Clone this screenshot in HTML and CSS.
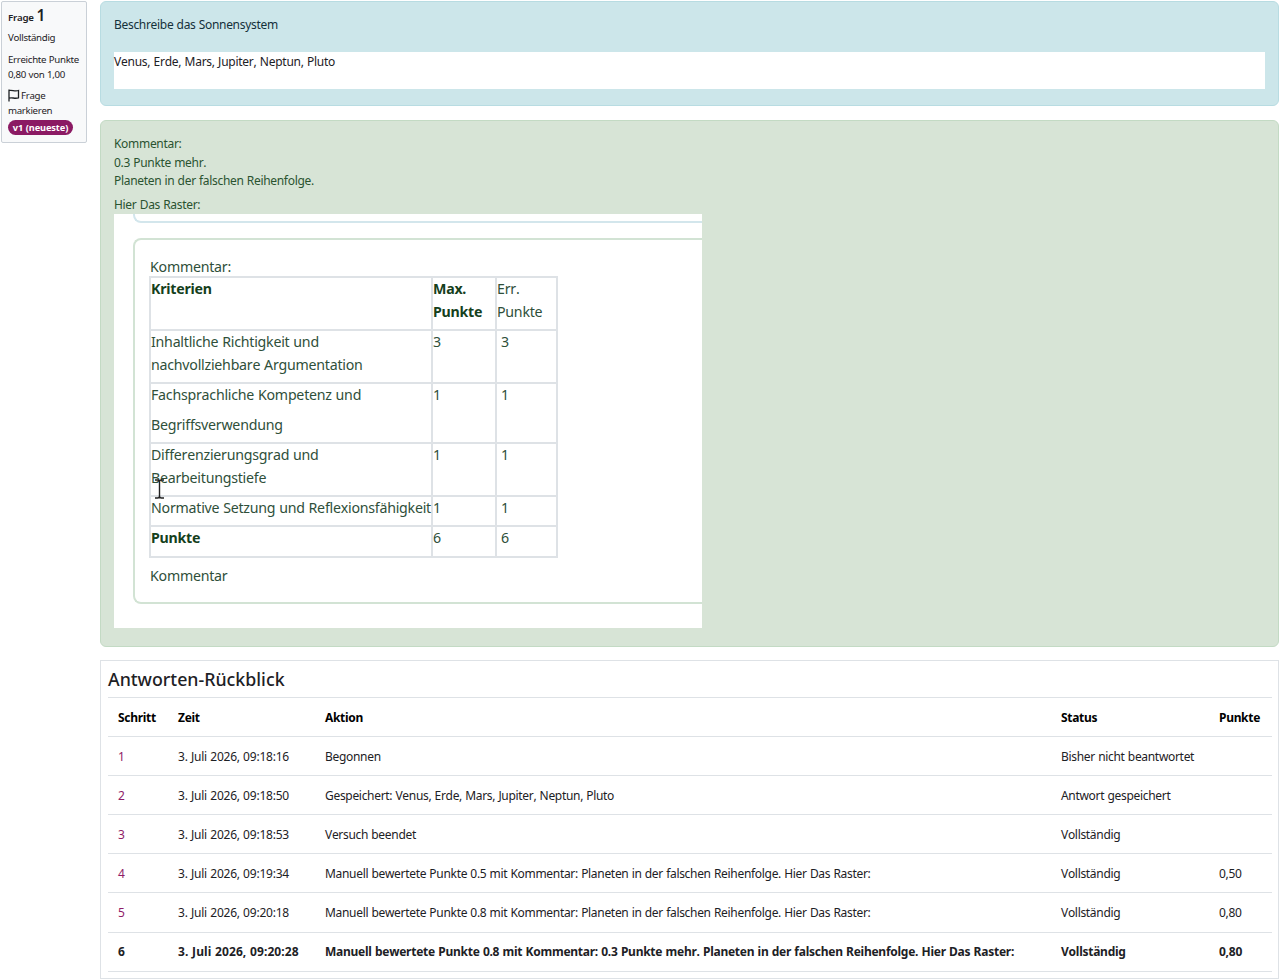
FILE: index.html
```
<!DOCTYPE html>
<html lang="de">
<head>
<meta charset="utf-8">
<title>Antworten-Rückblick</title>
<link rel="stylesheet" href="styles.css">
</head>
<body>
<div class="que">
    <div class="info">
        <h3 class="no">Frage <span class="qno">1</span></h3>
        <div class="state">Vollständig</div>
        <div class="grade">Erreichte Punkte<br>0,80 von 1,00</div>
        <div class="questionflag">
            <svg class="flag" viewBox="0 0 12 13" width="12" height="13"><path d="M1 .5V12.500M1 1.500C4 .5 6.500 2.800 10.500 1.500V8.800C6.500 10.300 4 7.800 1 9.200" fill="none" stroke="#1d2125" stroke-width="1.300"/></svg><span>Frage</span><br>markieren
        </div>
        <span class="badge">v1 (neueste)</span>
    </div>
    <div class="content">
        <div class="formulation">
            <p class="qtext">Beschreibe das Sonnensystem</p>
            <div class="answer">Venus, Erde, Mars, Jupiter, Neptun, Pluto</div>
        </div>
        <div class="outcome">
            <div class="comment">
                <p>Kommentar:<br>0.3 Punkte mehr.<br>Planeten in der falschen Reihenfolge.</p>
                <p class="last">Hier Das Raster:</p>
            </div>
            <div class="raster">
                <div class="raster-prev"></div>
                <div class="raster-box">
                    <div class="raster-label">Kommentar:</div>
                    <table class="criteria">
                        <colgroup><col class="k1"><col class="k2"><col class="k3"></colgroup>
                        <tr class="r1"><td><b>Kriterien</b></td><td><b>Max.<br>Punkte</b></td><td class="err">Err.<br>Punkte</td></tr>
                        <tr class="r2"><td>Inhaltliche Richtigkeit und<br>nachvollziehbare Argumentation</td><td>3</td><td>3</td></tr>
                        <tr class="r3"><td>Fachsprachliche Kompetenz und<div class="par">Begriffsverwendung</div></td><td>1</td><td>1</td></tr>
                        <tr class="r4"><td>Differenzierungsgrad und<br>Bearbeitungstiefe</td><td>1</td><td>1</td></tr>
                        <tr class="r5"><td>Normative Setzung und Reflexionsfähigkeit</td><td>1</td><td>1</td></tr>
                        <tr class="r6"><td><b>Punkte</b></td><td>6</td><td>6</td></tr>
                    </table>
                    <div class="raster-end">Kommentar</div>
                </div>
                <svg class="cursor" viewBox="0 0 11 20" width="11" height="20"><path d="M1 1H3.500Q5.500 1 5.500 3Q5.500 1 7.500 1H10M5.500 3V17M1 19H3.500Q5.500 19 5.500 17Q5.500 19 7.500 19H10" fill="none" stroke="#222" stroke-width="1.400"/></svg>
            </div>
        </div>
        <div class="history">
            <h4>Antworten-Rückblick</h4>
            <table class="steps">
                <colgroup><col class="c1"><col class="c2"><col class="c3"><col class="c4"><col class="c5"></colgroup>
                <tr><th>Schritt</th><th>Zeit</th><th>Aktion</th><th>Status</th><th>Punkte</th></tr>
                <tr><td><a href="#">1</a></td><td class="time">3. Juli 2026, 09:18:16</td><td>Begonnen</td><td>Bisher nicht beantwortet</td><td></td></tr>
                <tr><td><a href="#">2</a></td><td class="time">3. Juli 2026, 09:18:50</td><td>Gespeichert: Venus, Erde, Mars, Jupiter, Neptun, Pluto</td><td>Antwort gespeichert</td><td></td></tr>
                <tr><td><a href="#">3</a></td><td class="time">3. Juli 2026, 09:18:53</td><td>Versuch beendet</td><td>Vollständig</td><td></td></tr>
                <tr><td><a href="#">4</a></td><td class="time">3. Juli 2026, 09:19:34</td><td>Manuell bewertete Punkte 0.5 mit Kommentar: Planeten in der falschen Reihenfolge. Hier Das Raster:</td><td>Vollständig</td><td>0,50</td></tr>
                <tr><td><a href="#">5</a></td><td class="time">3. Juli 2026, 09:20:18</td><td>Manuell bewertete Punkte 0.8 mit Kommentar: Planeten in der falschen Reihenfolge. Hier Das Raster:</td><td>Vollständig</td><td>0,80</td></tr>
                <tr class="current"><td>6</td><td class="time">3. Juli 2026, 09:20:28</td><td>Manuell bewertete Punkte 0.8 mit Kommentar: 0.3 Punkte mehr. Planeten in der falschen Reihenfolge. Hier Das Raster:</td><td>Vollständig</td><td>0,80</td></tr>
            </table>
        </div>
    </div>
</div>
</body>
</html>
```
FILE: styles.css
```
* {
    box-sizing: border-box;
}
body {
    margin: 0;
    background-color: #fff;
    color: #1d2125;
    font: 12px/18.5px "Segoe UI", "Noto Sans", sans-serif;
    font-kerning: none;
    letter-spacing: -0.31px;
    word-spacing: 0.4px;
    overflow: hidden;
}
p, h3, h4 {
    margin: 0;
}
.que {
    display: flex;
    align-items: flex-start;
    gap: 13px;
    padding: 1px 1px 0 1px;
}
.info {
    width: 86px;
    height: 142px;
    padding: 4px 0 0 6px;
    background-color: #f8f9fa;
    border: 1px solid #cad0d7;
    border-radius: 2px;
    font-size: 9.7px;
    line-height: 15px;
    white-space: nowrap;
}
.info .no {
    font-size: 9.7px;
    font-weight: 600;
    letter-spacing: -0.2px;
    line-height: 18px;
}
.info .qno {
    font-size: 15.5px;
}
.info .state {
    margin-top: 3px;
}
.info .grade {
    margin-top: 7px;
}
.questionflag {
    margin-top: 6px;
    line-height: 15px;
}
.flag {
    margin-right: 1px;
    vertical-align: -3px;
}
.badge {
    display: block;
    width: 65px;
    height: 15px;
    margin-top: 2px;
    border-radius: 8px;
    background-color: #8b1a63;
    color: #fff;
    font-size: 9.2px;
    font-weight: 700;
    letter-spacing: -0.1px;
    line-height: 15px;
    text-align: center;
}
.content {
    flex: 1;
    min-width: 0;
}
.formulation {
    height: 105px;
    padding: 14px 13px;
    background-color: #cce6ea;
    border: 1px solid #b8dce2;
    border-radius: 6px;
    color: #14303a;
}
.answer {
    height: 37px;
    margin-top: 17.5px;
    padding-top: 1px;
    background-color: #fff;
    color: #1d2125;
    letter-spacing: -0.25px;
}
.outcome {
    height: 527px;
    margin-top: 14px;
    padding: 13px;
    background-color: #d7e4d6;
    border: 1px solid #c3dac4;
    border-radius: 6px;
    color: #2a5330;
}
.comment {
    height: 80px;
    padding-top: 1px;
}
.comment .last {
    margin-top: 5px;
}
.raster {
    position: relative;
    width: 588px;
    height: 414px;
    padding-left: 19px;
    overflow: hidden;
    background-color: #fff;
    font-size: 14.2px;
    letter-spacing: -0.24px;
    line-height: 23px;
    color: #2f4f3a;
}
.raster-prev {
    height: 9px;
    border: solid #d3e6ec;
    border-width: 0 0 2px 2px;
    border-bottom-left-radius: 8px;
}
.raster-box {
    height: 366px;
    margin-top: 15px;
    padding: 15px 0 0 15px;
    border: solid #d2e3d4;
    border-width: 2px 0 2px 2px;
    border-radius: 8px 0 0 8px;
}
.raster-label {
    height: 21px;
}
.criteria {
    width: 408px;
    margin-left: -1px;
    table-layout: fixed;
    border-collapse: collapse;
    line-height: 22.5px;
}
.criteria td {
    padding: 0;
    border: 2px solid #dee2e6;
    vertical-align: top;
    white-space: nowrap;
}
.criteria td:nth-child(3) {
    padding-left: 4px;
}
.criteria td.err {
    padding-left: 0;
}
.criteria b {
    color: #15401c;
}
.k1 { width: 282px; }
.k2 { width: 64px; }
.k3 { width: 61px; }
.r1 { height: 53px; }
.r2 { height: 53px; }
.r3 { height: 60px; }
.r4 { height: 53px; }
.r5 { height: 30px; }
.r6 { height: 31px; }
.par {
    margin-top: 7px;
}
.raster-end {
    margin-top: 6px;
}
.cursor {
    position: absolute;
    left: 40px;
    top: 265px;
}
.history {
    height: 319px;
    margin-top: 13px;
    padding: 7px;
    border: 1px solid #dee2e6;
}
.history h4 {
    height: 29px;
    font-size: 17.8px;
    font-weight: 500;
    letter-spacing: 0;
    line-height: 22px;
}
.steps {
    width: 1164px;
    table-layout: fixed;
    border-collapse: collapse;
}
.steps th,
.steps td {
    height: 39.1px;
    padding: 2px 0 0 10px;
    border-top: 1px solid #dee2e6;
    border-bottom: 1px solid #dee2e6;
    text-align: left;
    white-space: nowrap;
}
.steps .time {
    letter-spacing: -0.22px;
}
.steps th {
    color: #000;
}
.steps a {
    color: #8f1d68;
    text-decoration: none;
}
.steps .current {
    font-weight: 700;
    letter-spacing: -0.25px;
}
.steps .current .time {
    letter-spacing: 0.1px;
}
.c1 { width: 60px; }
.c2 { width: 147px; }
.c3 { width: 736px; }
.c4 { width: 158px; }
.c5 { width: 63px; }
```
